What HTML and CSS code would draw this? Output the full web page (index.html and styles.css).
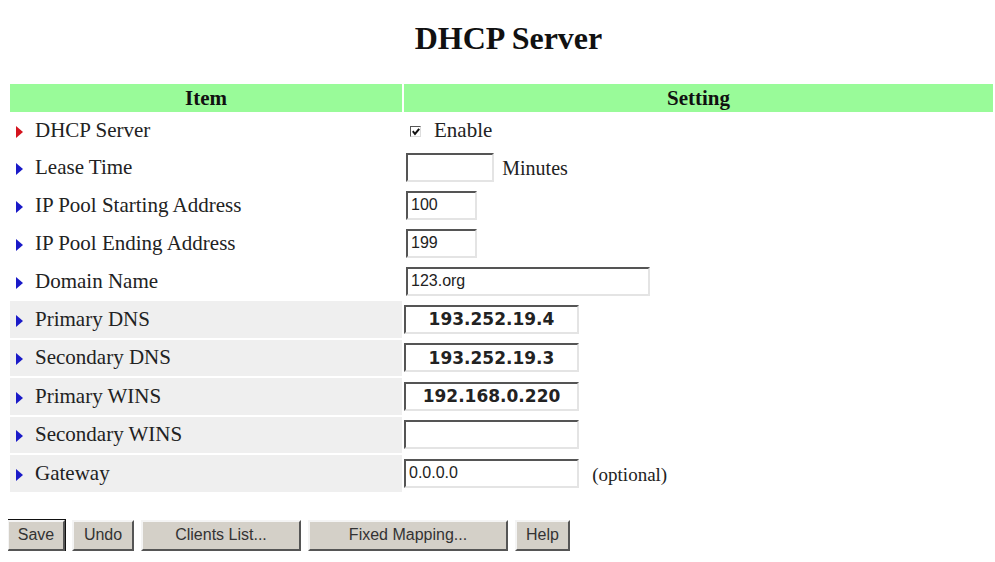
FILE: index.html
```html
<!DOCTYPE html>
<html lang="en">
<head>
  <meta charset="UTF-8">
  <title>DHCP Server</title>
  <link rel="stylesheet" href="styles.css">
</head>
<body>

  <h1 class="title">DHCP Server</h1>

  <table class="settings">
    <tr class="head">
      <th class="col-item">Item</th>
      <th class="col-setting">Setting</th>
    </tr>
    <tr class="row-short">
      <td class="item"><span class="arrow red"></span>DHCP Server</td>
      <td class="setting">
        <span class="checkbox">
          <svg width="10" height="10" viewBox="0 0 10 10"><path d="M1.8 4.2 L4 7 L8.2 1.8" fill="none" stroke="#111" stroke-width="2"/></svg>
        </span>Enable
      </td>
    </tr>
    <tr>
      <td class="item"><span class="arrow"></span>Lease Time</td>
      <td class="setting"><input class="field w-lease" type="text" value=""> <span class="note">Minutes</span></td>
    </tr>
    <tr>
      <td class="item"><span class="arrow"></span>IP Pool Starting Address</td>
      <td class="setting"><input class="field w-pool" type="text" value="100"></td>
    </tr>
    <tr>
      <td class="item"><span class="arrow"></span>IP Pool Ending Address</td>
      <td class="setting"><input class="field w-pool" type="text" value="199"></td>
    </tr>
    <tr>
      <td class="item"><span class="arrow"></span>Domain Name</td>
      <td class="setting"><input class="field w-domain" type="text" value="123.org"></td>
    </tr>
    <tr class="shaded">
      <td class="item"><span class="arrow"></span>Primary DNS</td>
      <td class="setting"><input class="field w-ip ip-bold" type="text" value="193.252.19.4"></td>
    </tr>
    <tr class="shaded">
      <td class="item"><span class="arrow"></span>Secondary DNS</td>
      <td class="setting"><input class="field w-ip ip-bold" type="text" value="193.252.19.3"></td>
    </tr>
    <tr class="shaded">
      <td class="item"><span class="arrow"></span>Primary WINS</td>
      <td class="setting"><input class="field w-ip ip-bold" type="text" value="192.168.0.220"></td>
    </tr>
    <tr class="shaded">
      <td class="item"><span class="arrow"></span>Secondary WINS</td>
      <td class="setting"><input class="field w-ip ip-bold" type="text" value=""></td>
    </tr>
    <tr class="shaded">
      <td class="item"><span class="arrow"></span>Gateway</td>
      <td class="setting"><input class="field w-ip" type="text" value="0.0.0.0"> <span class="note optional">(optional)</span></td>
    </tr>
  </table>

  <div class="buttons">
    <button class="btn btn-default w-save">Save</button>
    <button class="btn w-undo">Undo</button>
    <button class="btn w-clients">Clients List...</button>
    <button class="btn w-fixed">Fixed Mapping...</button>
    <button class="btn w-help">Help</button>
  </div>

</body>
</html>
```

FILE: styles.css
```css
body {
  margin: 8px 0 8px 8px;
  background-color: #ffffff;
  font-family: 'Liberation Serif', 'Times New Roman', serif;
  color: #222;
}

.title {
  margin: 12px 0 26px;
  padding-left: 14px;
  font-size: 32px;
  line-height: 36px;
  font-weight: bold;
  text-align: center;
  color: #111;
}

.settings {
  width: 987px;
  border-spacing: 2px 2px;
  font-size: 21px;
}

.head th {
  height: 28px;
  padding: 0;
  background-color: #99fb99;
  font-size: 21px;
  font-weight: bold;
  color: #111;
}

.col-item {
  width: 392px;
}

.settings td {
  height: 36px;
  padding: 0;
  vertical-align: middle;
}

.settings .row-short td {
  height: 33px;
}

.settings .shaded td {
  height: 36.5px;
}

.item {
  padding-left: 6px !important;
}

.shaded .item {
  background-color: #efefef;
}

.arrow {
  display: inline-block;
  width: 0;
  height: 0;
  margin-right: 12px;
  border-left: 7px solid #1a1ac8;
  border-top: 6px solid transparent;
  border-bottom: 6px solid transparent;
  vertical-align: -1px;
}

.arrow.red {
  border-left-color: #d4141e;
}

.checkbox {
  display: inline-block;
  box-sizing: border-box;
  width: 11px;
  height: 11px;
  margin: 0 13px 0 6px;
  border-top: 1px solid #555;
  border-left: 1px solid #555;
  border-bottom: 1px solid #ddd;
  border-right: 1px solid #ddd;
  background-color: #fff;
  vertical-align: 0;
}

.checkbox svg {
  display: block;
  margin: -0.5px;
}

.field {
  box-sizing: border-box;
  height: 29px;
  margin: 0 0 0 2px;
  padding: 0 3px;
  border-top: 2px solid #555;
  border-left: 2px solid #555;
  border-bottom: 2px solid #e4e4e4;
  border-right: 2px solid #e4e4e4;
  background-color: #fff;
  font-family: 'Liberation Sans', Arial, sans-serif;
  font-size: 16px;
  color: #222;
  vertical-align: middle;
}

.w-lease { width: 88px; }
.w-pool { width: 71px; }
.w-domain { width: 244px; }
.w-ip { width: 175px; margin-left: 0; }

.ip-bold {
  font-family: 'DejaVu Sans', Verdana, sans-serif;
  font-weight: bold;
  font-size: 17px;
  text-align: center;
}

.note {
  margin-left: 3px;
  vertical-align: -3px;
  font-size: 20px;
}

.optional {
  margin-left: 8px;
  font-size: 19px;
}

.buttons {
  display: flex;
  gap: 7px;
  margin-top: 26px;
  margin-left: -1px;
}

.btn {
  box-sizing: border-box;
  height: 31px;
  padding: 0;
  border-top: 2px solid #f4f4f4;
  border-left: 2px solid #f4f4f4;
  border-bottom: 2px solid #555;
  border-right: 2px solid #555;
  background-color: #d4d0c8;
  font-family: 'Liberation Sans', Arial, sans-serif;
  font-size: 16px;
  color: #333;
}

.btn-default {
  outline: 1px solid #111;
}

.w-save { width: 58px; }
.w-undo { width: 62px; }
.w-clients { width: 160px; }
.w-fixed { width: 200px; }
.w-help { width: 55px; }
```
